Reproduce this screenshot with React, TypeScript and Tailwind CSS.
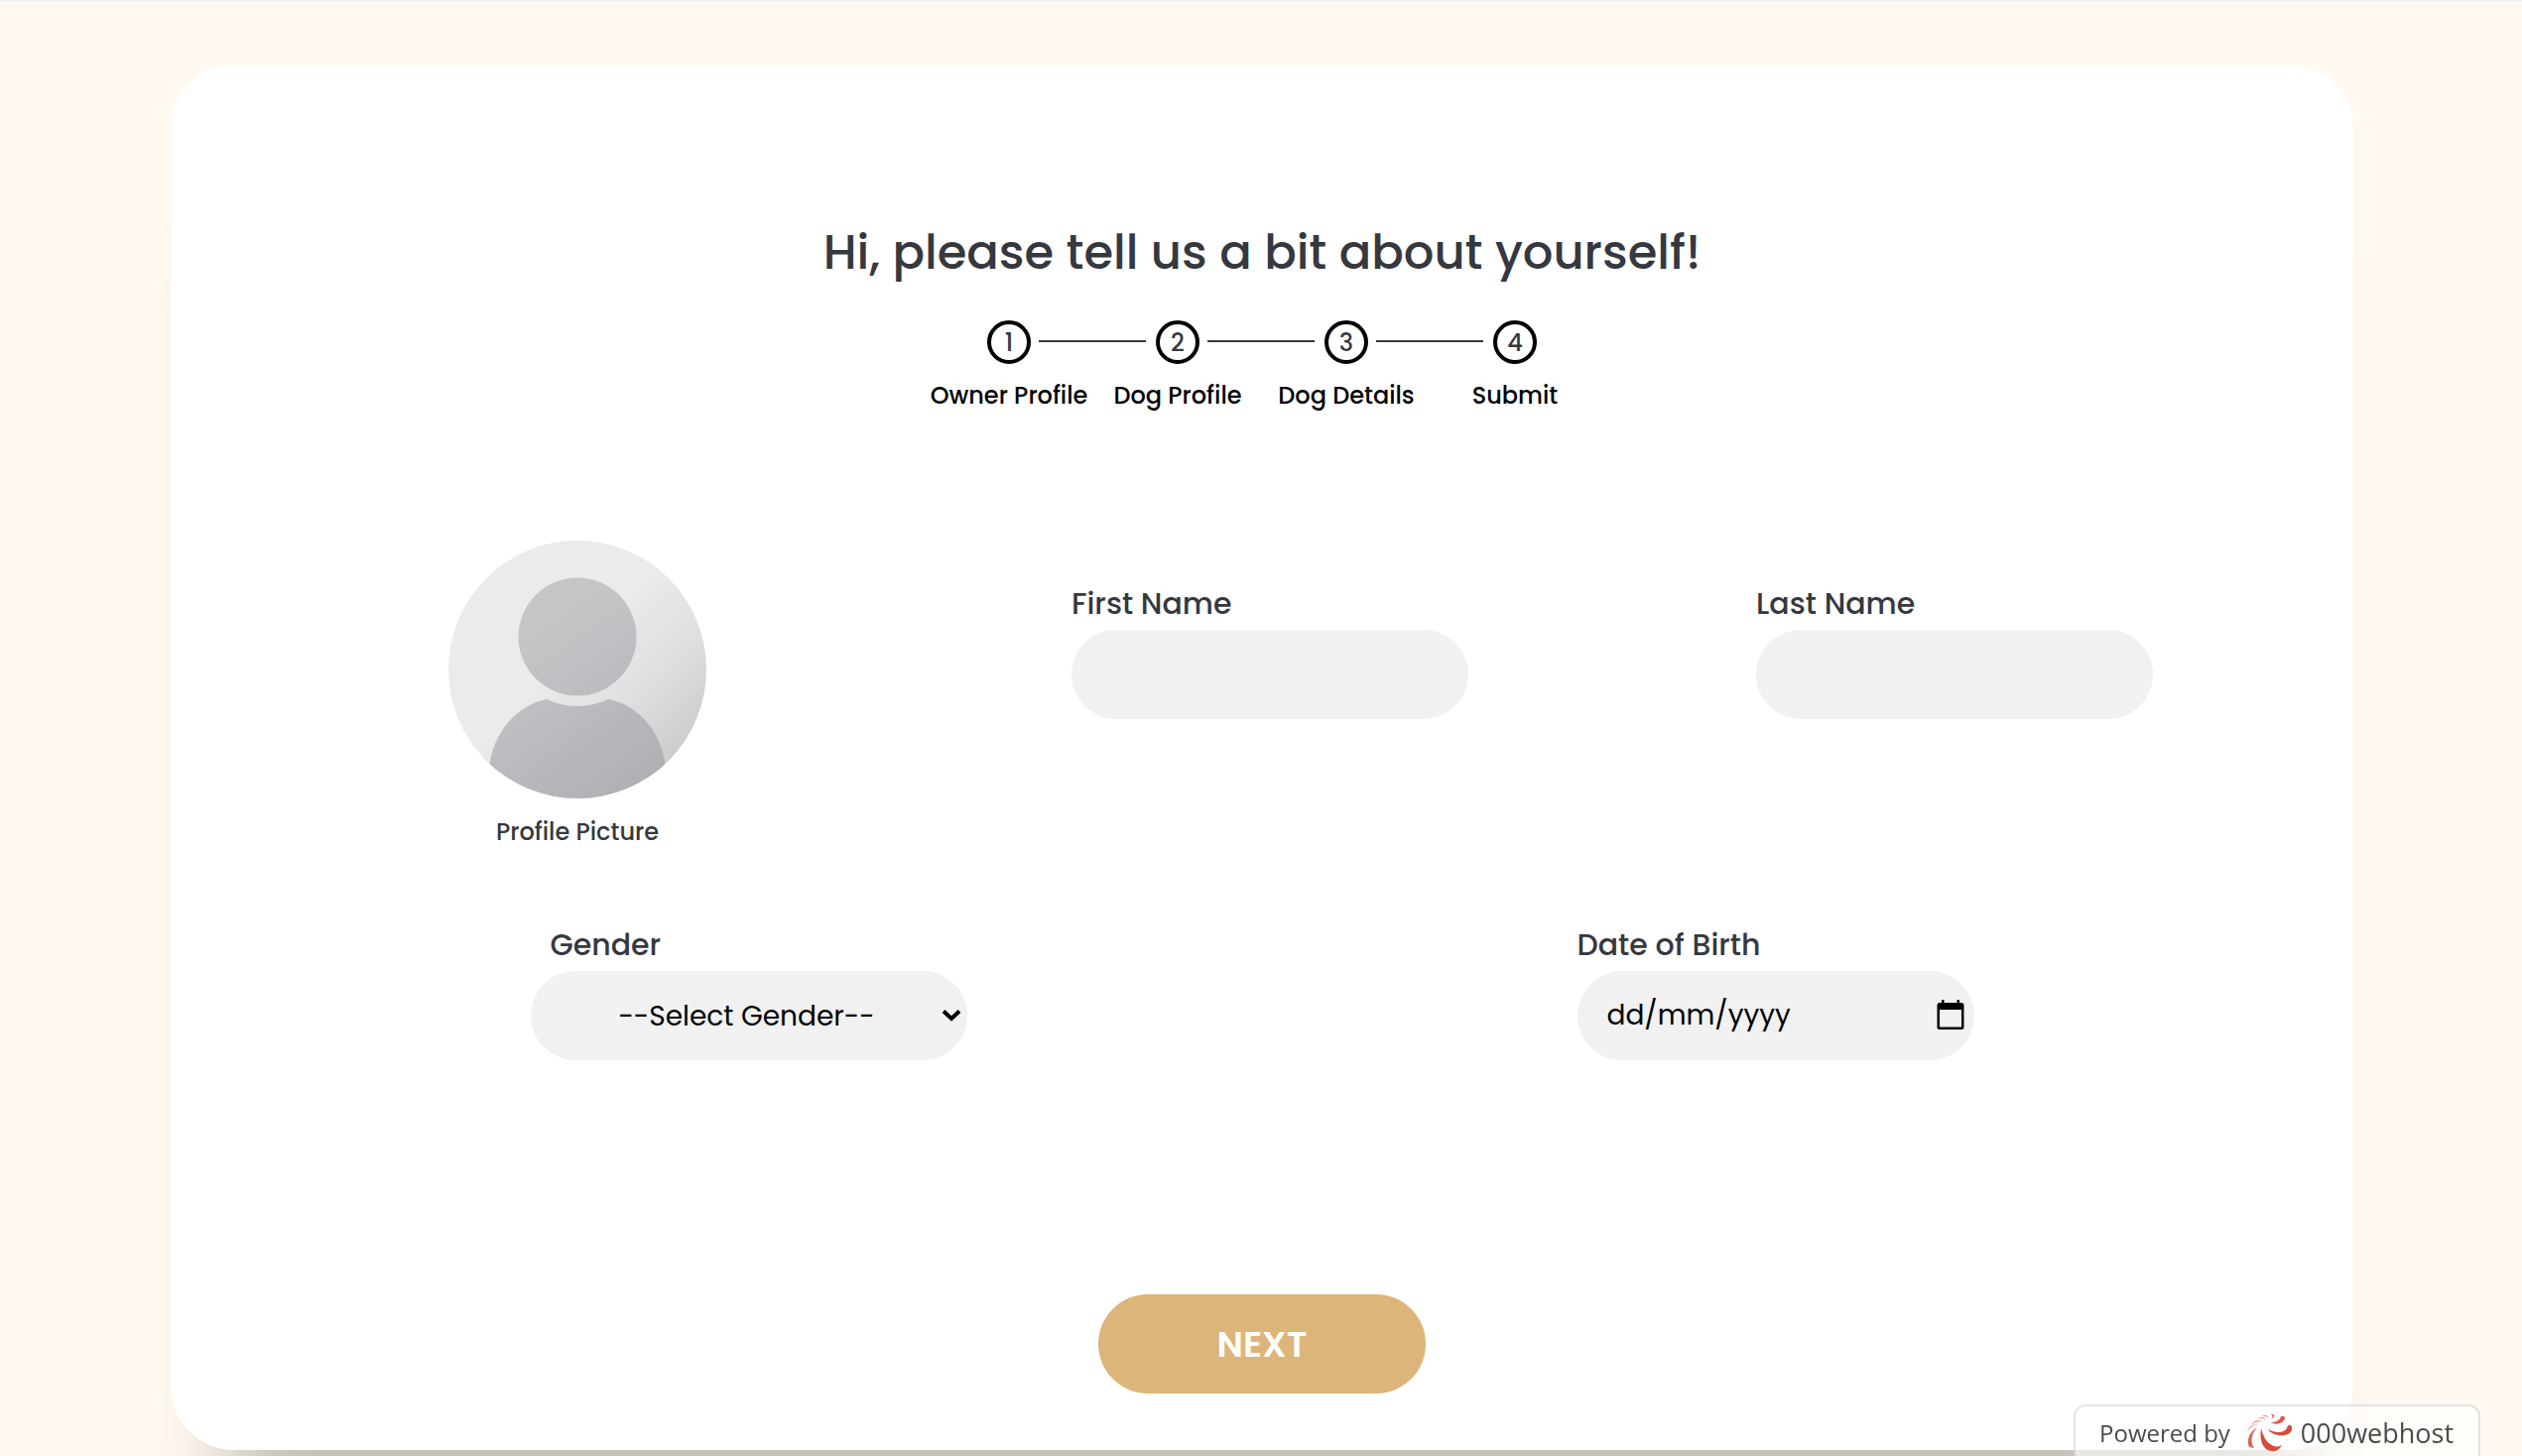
import { Fragment, type ReactNode } from "react";

const steps = ["Owner Profile", "Dog Profile", "Dog Details", "Submit"];

const fieldClass =
  "h-[90px] rounded-full bg-[#f1f1f1] text-[28px] text-black placeholder:text-black placeholder:opacity-100 outline-none";

function Field({ id, label, className, labelClassName, children }: {
  id: string;
  label: string;
  className: string;
  labelClassName?: string;
  children: ReactNode;
}) {
  return (
    <div className={`flex flex-col gap-1 ${className}`}>
      <label htmlFor={id} className={`text-[30px] leading-[44px] font-medium ${labelClassName ?? ""}`}>
        {label}
      </label>
      {children}
    </div>
  );
}

function Avatar() {
  return (
    <svg viewBox="0 0 260 260" className="size-[260px]" aria-hidden="true">
      <defs>
        <linearGradient id="avatar-bg" x1="0" y1="0" x2="1" y2="1">
          <stop offset="0.45" stopColor="#e9ebec" />
          <stop offset="0.65" stopColor="#dfe0e1" />
          <stop offset="0.9" stopColor="#c8c9ca" />
        </linearGradient>
        <linearGradient id="avatar-fg" gradientUnits="userSpaceOnUse" x1="70" y1="40" x2="220" y2="250">
          <stop offset="0.2" stopColor="#c4c5c6" />
          <stop offset="0.4" stopColor="#bfc0c3" />
          <stop offset="1" stopColor="#adaeb1" />
        </linearGradient>
        <clipPath id="avatar-clip">
          <circle cx="130" cy="130" r="130" />
        </clipPath>
      </defs>
      <g clipPath="url(#avatar-clip)">
        <rect width="260" height="260" fill="url(#avatar-bg)" />
        <circle cx="130" cy="97" r="59.5" fill="url(#avatar-fg)" />
        <path
          d="M41 230C44 195 68 166 99 160Q113 167 130 167Q147 167 161 160C193 166 216 195 219 230V260H41Z"
          fill="url(#avatar-fg)"
        />
      </g>
    </svg>
  );
}

function HostLogo() {
  return (
    <svg viewBox="0 0 47 40" className="h-10 w-[47px]" fill="#d54c38" aria-hidden="true">
      <path d="M15 15C13 27 17 37 25 38C30 39 34 36 36 32C32 34 29 34 26 32C20 29 17 23 15 15Z" />
      <path d="M22 16C29 20 38 20 41 15Q42 11 45 12C48 16 45 21 39 22C32 23 25 21 22 16Z" />
      <path d="M11 14C3 19 0 27 3 34L8 35C4 29 5 21 11 14Z" opacity=".85" />
      <path d="M25 9C30 9 34 7 35 3Q38 2 39 4C39 7 37 9 34 10C31 11 28 11 25 9Z" opacity=".9" />
      <path d="M25 1C29 0 30 4 25 6C27 4 27 2 25 1Z" opacity=".8" />
      <path d="M1 18C3 13 7 11 12 11C7 12 4 14 1 18ZM5 12C7 8 11 6 16 8C11 8 8 9 5 12ZM10 7C13 4 17 3 20 6C16 5 13 5 10 7ZM16 3C19 1 22 2 23 5C21 3 19 3 16 3Z" opacity=".65" />
    </svg>
  );
}

export default function App() {
  return (
    <div className="min-h-screen overflow-hidden border-t-2 border-[#e8f3f8] bg-[#fff9f1] pt-16 pr-[170px] pb-[6px] pl-[172px] font-[Poppins,Inter,sans-serif] text-[#36383f]">
      <main className="rounded-[64px] bg-white pt-[153px] pb-[57px] shadow-[0_120px_80px_-60px_rgba(0,0,0,0.24)]">
        <form onSubmit={(event) => event.preventDefault()}>
          <h1 className="text-center text-[48px] leading-[72px] font-medium">
            Hi, please tell us a bit about yourself!
          </h1>

          <ol className="mt-8 flex justify-center">
            {steps.map((step, index) => (
              <Fragment key={step}>
                {index > 0 && <li aria-hidden="true" className="mt-5 mr-[2px] h-[2px] w-[108px] shrink-0 bg-[#36383f]" />}
                <li className="flex w-[60px] flex-col items-center gap-[14px]">
                  <span className="flex size-11 items-center justify-center rounded-full border-4 border-black pt-[2px] text-2xl font-medium">
                    {index + 1}
                  </span>
                  <span className="text-2xl leading-9 font-medium whitespace-nowrap text-black">{step}</span>
                </li>
              </Fragment>
            ))}
          </ol>

          <div className="mx-auto mt-32 flex w-[95%] items-start justify-around px-[2px]">
            <div className="flex w-[416px] flex-col items-center gap-4">
              <Avatar />
              <span className="text-2xl leading-9 font-medium">Profile Picture</span>
            </div>
            <Field id="first-name" label="First Name" className="mt-[42px] w-[400px]">
              <input id="first-name" type="text" className={`${fieldClass} px-[30px]`} />
            </Field>
            <Field id="last-name" label="Last Name" className="mt-[42px] w-[400px]">
              <input id="last-name" type="text" className={`${fieldClass} px-[30px]`} />
            </Field>
          </div>

          <div className="mx-auto mt-[74px] flex w-[95%] justify-around pr-5">
            <Field id="gender" label="Gender" className="w-[440px]" labelClassName="pl-5">
              <div className="relative">
                <select id="gender" className={`${fieldClass} w-full appearance-none pt-[2px] pr-1 text-center`}>
                  <option>--Select Gender--</option>
                  <option>Female</option>
                  <option>Male</option>
                </select>
                <svg viewBox="0 0 20 14" className="pointer-events-none absolute top-[38px] right-[6px] h-[14px] w-5" fill="none" stroke="#000" strokeWidth="4" aria-hidden="true">
                  <path d="M2 2.500L10 10L18 2.500" />
                </svg>
              </div>
            </Field>
            <Field id="birth-date" label="Date of Birth" className="w-[400px]">
              <div className="relative">
                <input id="birth-date" type="text" placeholder="dd/mm/yyyy" className={`${fieldClass} w-full px-[30px]`} />
                <button type="button" aria-label="Open calendar" className="absolute top-[29px] right-[10px]">
                  <svg viewBox="0 0 28 30" className="h-[30px] w-7" aria-hidden="true">
                    <path fillRule="evenodd" d="M5 0H7.500V3H20.500V0H23V3H25Q27.500 3 27.500 5.500V27.500Q27.500 30 25 30H3Q.5 30 .5 27.500V5.500Q.5 3 3 3H5ZM3 10V27.500H25V10Z" />
                  </svg>
                </button>
              </div>
            </Field>
          </div>

          <button type="submit" className="mx-auto mt-[236px] block h-[100px] w-[330px] rounded-full bg-[#dcb57a] pt-[2px] text-[36px] font-semibold text-white">
            NEXT
          </button>
        </form>
      </main>

      <a href="#host" className="fixed right-[42px] bottom-0 flex h-[52px] w-[410px] items-center rounded-t-xl border-2 border-b-0 border-black/10 bg-white/60 pt-1 pl-6 font-['Open_Sans',sans-serif] text-2xl whitespace-nowrap text-[#4b4b4b]">
        Powered by
        <span className="mr-2 ml-4">
          <HostLogo />
        </span>
        <span className="text-[27px] font-medium">000webhost</span>
      </a>
    </div>
  );
}
